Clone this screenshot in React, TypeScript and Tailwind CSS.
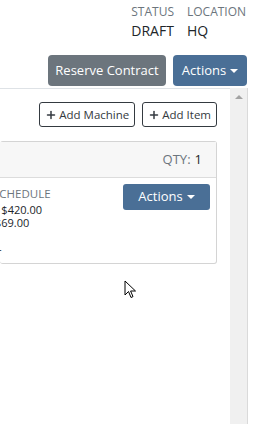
import { Plus } from 'lucide-react';

function Caret() {
  return <span className="ml-[4px] inline-block h-0 w-0 border-x-[4px] border-t-[4px] border-x-transparent border-t-white align-middle" />;
}

export default function App() {
  return (
    <div className="relative h-[424px] w-[253px] overflow-hidden bg-white text-[#212529]" style={{ fontFamily: '"Open Sans", "Noto Sans", sans-serif' }}>
      {/* Header */}
      <div className="flex justify-end gap-[13px] pr-[6px] pt-[4px]">
        <div className="flex flex-col">
          <span className="text-[12px] leading-[16px] text-[#6c757d]">STATUS</span>
          <span className="mt-[2px] text-[14px] leading-[18px]">DRAFT</span>
        </div>
        <div className="flex w-[60px] flex-col">
          <span className="text-[12px] leading-[16px] text-[#6c757d]">LOCATION</span>
          <span className="mt-[2px] text-[14px] leading-[18px]">HQ</span>
        </div>
      </div>

      <div className="mt-[15px] flex justify-end gap-[7px] pr-[6px]">
        <button className="h-[31px] w-[118px] rounded-[4px] bg-[#6c757d] text-[13px] text-white">Reserve Contract</button>
        <button className="flex h-[31px] w-[74px] items-center justify-center rounded-[4px] bg-[#4a6f96] text-[13px] text-white">
          Actions
          <Caret />
        </button>
      </div>

      {/* Scroll area */}
      <div className="mt-[2px] flex h-[336px]">
        <div className="w-[230px] overflow-hidden border-t border-[#dee2e6]">
          <div className="flex justify-end gap-[7px] pr-[13px] pt-[13px]">
            <button className="flex h-[25px] items-center gap-[2px] rounded-[3px] border border-[#343a40] px-[5px] text-[11.5px] text-[#343a40]">
              <Plus size={12} strokeWidth={3} />
              Add Machine
            </button>
            <button className="flex h-[25px] items-center gap-[2px] rounded-[3px] border border-[#343a40] px-[5px] text-[11.5px] text-[#343a40]">
              <Plus size={12} strokeWidth={3} />
              Add Item
            </button>
          </div>

          <div className="mr-[13px] mt-[14px] rounded-[3px] border border-l-0 border-[#d4d4d4]">
            <div className="flex h-[36px] items-center justify-end border-b border-[#dcdcdc] bg-[#f7f7f7] pr-[14px] text-[13px]">
              <span className="text-[#6c757d]">QTY:</span>
              <span className="ml-[4px]">1</span>
            </div>
            <div className="flex h-[85px] justify-between pr-[6px] pt-[6px]">
              <div className="flex flex-col pt-[2px] text-[11px] leading-[13px]">
                <span className="-ml-[7px] text-[11.5px] leading-[16px] text-[#6c757d]">SCHEDULE</span>
                <span className="-ml-[24px] mt-[1px]">Day: $420.00</span>
                <span className="-ml-[5px]">$69.00</span>
                <span className="-ml-[2px] mt-[13px]">-</span>
              </div>
              <button className="flex h-[26px] w-[87px] items-center justify-center rounded-[3px] bg-[#4a6f96] text-[13px] text-white">
                Actions
                <Caret />
              </button>
            </div>
          </div>
        </div>

        {/* Scrollbar */}
        <div className="flex w-[17px] flex-col items-center bg-[#f0f0f0] pt-[7px]">
          <span className="h-0 w-0 border-x-[4px] border-b-[4px] border-x-transparent border-b-[#a3a3a3]" />
        </div>
        <div className="w-[1px] bg-[#dadada]" />
      </div>

      {/* Mouse cursor */}
      <svg className="absolute left-[124px] top-[280px]" width="13" height="19" viewBox="0 0 13 19">
        <path d="M1 1 L1 15 L4.5 11.5 L7 17.5 L9 16.6 L6.6 11 L11.5 11 Z" fill="#fff" stroke="#000" strokeWidth="1" />
      </svg>
    </div>
  );
}
